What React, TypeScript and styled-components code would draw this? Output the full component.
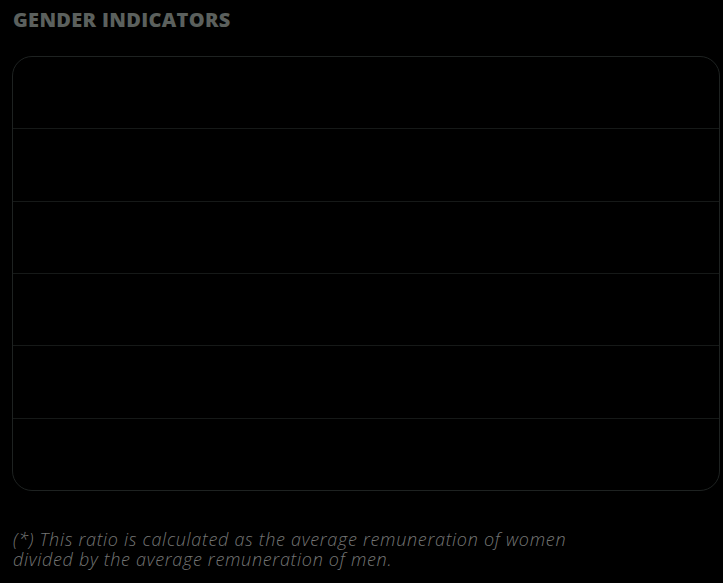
import React from "react";
import styled, { createGlobalStyle } from "styled-components";

const Global = createGlobalStyle`
  html, body { margin: 0; padding: 0; background: #000; }
  body { font-family: "Open Sans", "Liberation Sans", sans-serif; }
`;

const Page = styled.div`
  width: 723px;
  height: 583px;
  box-sizing: border-box;
  padding: 6px 3px 0 12px;
  background: #000;
  display: flex;
  flex-direction: column;
`;

const Title = styled.h2`
  margin: 0 0 0 1px;
  font-family: "Open Sans", "Liberation Sans", sans-serif;
  font-weight: 800;
  font-size: 20px;
  line-height: 28px;
  letter-spacing: 0.3px;
  color: #5b605d;
  text-transform: uppercase;
`;

const Table = styled.div`
  margin-top: 22px;
  height: 435px;
  box-sizing: border-box;
  border: 1px solid #1e2221;
  border-radius: 20px;
  display: flex;
  flex-direction: column;
  overflow: hidden;
`;

const Row = styled.div`
  flex: 1;
  border-bottom: 1px solid #161918;
  &:last-child { border-bottom: none; }
`;

const Note = styled.p`
  margin: 38px 0 0 1px;
  max-width: 575px;
  font-family: "Open Sans", "Liberation Sans", sans-serif;
  font-style: italic;
  font-weight: 300;
  font-size: 18px;
  line-height: 20px;
  letter-spacing: 0.7px;
  color: #747574;
`;

export default function App() {
  return (
    <>
      <Global />
      <Page>
        <Title>Gender Indicators</Title>
        <Table>
          {Array.from({ length: 6 }).map((_, i) => (
            <Row key={i} />
          ))}
        </Table>
        <Note>
          (*) This ratio is calculated as the average remuneration of women
          divided by the average remuneration of men.
        </Note>
      </Page>
    </>
  );
}
